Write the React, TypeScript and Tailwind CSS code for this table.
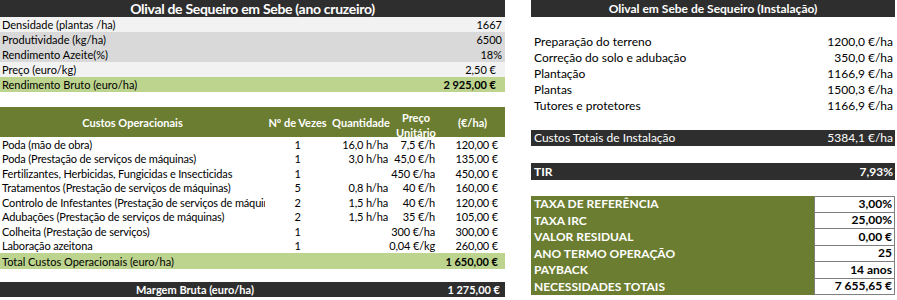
import React from "react";

const topRows = [
  { label: "Densidade (plantas /ha)", value: "1667", bg: "bg-[#f2f2f2]", pr: "pr-[3px]" },
  { label: "Produtividade (kg/ha)", value: "6500", bg: "bg-[#d9d9d9]", pr: "pr-[3px]" },
  { label: "Rendimento Azeite(%)", value: "18%", bg: "bg-[#d9d9d9]", pr: "pr-[3px]" },
  { label: "Preço (euro/kg)", value: "2,50 €", bg: "bg-[#f2f2f2]", pr: "pr-[9px]" },
];

const costRows = [
  ["Poda (mão de obra)", "1", "16,0 h/ha", "7,5 €/h", "120,00 €"],
  ["Poda (Prestação de serviços de máquinas)", "1", "3,0 h/ha", "45,0 €/h", "135,00 €"],
  ["Fertilizantes, Herbicidas, Fungicidas e Insecticidas", "1", "", "450 €/ha", "450,00 €"],
  ["Tratamentos (Prestação de serviços de máquinas)", "5", "0,8 h/ha", "40 €/h", "160,00 €"],
  ["Controlo de Infestantes (Prestação de serviços de máquinas)", "2", "1,5 h/ha", "40 €/h", "120,00 €"],
  ["Adubações (Prestação de serviços de máquinas)", "2", "1,5 h/ha", "35 €/h", "105,00 €"],
  ["Colheita (Prestação de serviços)", "1", "", "300 €/ha", "300,00 €"],
  ["Laboração azeitona", "1", "", "0,04 €/kg", "260,00 €"],
];

const instRows = [
  ["Preparação do terreno", "1200,0 €/ha"],
  ["Correção do solo e adubação", "350,0 €/ha"],
  ["Plantação", "1166,9 €/ha"],
  ["Plantas", "1500,3 €/ha"],
  ["Tutores e protetores", "1166,9 €/ha"],
];

const finRows = [
  ["TAXA DE REFERÊNCIA", "3,00%"],
  ["TAXA IRC", "25,00%"],
  ["VALOR RESIDUAL", "0,00 €"],
  ["ANO TERMO OPERAÇÃO", "25"],
  ["PAYBACK", "14 anos"],
  ["NECESSIDADES TOTAIS", "7 655,65 €"],
];

const grid = "grid grid-cols-[265px_65px_62px_48px_65px]";

export default function App() {
  return (
    <div className="w-[897px] h-[300px] bg-white overflow-hidden font-['Lato','Liberation_Sans',sans-serif] text-[11px] text-black leading-none whitespace-nowrap flex">
      {/* Left panel */}
      <div className="w-[505px] flex flex-col">
        <div className="h-[17px] bg-[#2e2e2e] text-white font-bold text-[14px] flex items-center justify-center tracking-[-0.3px]">
          Olival de Sequeiro em Sebe (ano cruzeiro)
        </div>
        {topRows.map((r) => (
          <div key={r.label} className={`h-[15px] ${r.bg} flex items-center justify-between pl-[2px] ${r.pr}`}>
            <span>{r.label}</span>
            <span>{r.value}</span>
          </div>
        ))}
        <div className="h-[15px] bg-[#bdd48e] flex items-center justify-between pl-[2px] pr-[9px]">
          <span>Rendimento Bruto (euro/ha)</span>
          <span className="font-bold">2 925,00 €</span>
        </div>

        <div className={`${grid} mt-[15px] h-[30px] bg-[#6b7d30] text-white font-bold`}>
          <div className="flex items-center justify-center">Custos Operacionais</div>
          <div className="flex items-center justify-center">Nº de Vezes</div>
          <div className="flex items-center justify-center">Quantidade</div>
          <div className="flex flex-col items-center pt-[5px] gap-[4px]">
            <span>Preço</span>
            <span>Unitário</span>
          </div>
          <div className="flex items-center justify-center">(€/ha)</div>
        </div>
        {costRows.map((r) => (
          <div key={r[0]} className={`${grid} h-[14.5px] tracking-[-0.15px]`}>
            <div className="flex items-center pl-[2px] overflow-hidden">{r[0]}</div>
            <div className="flex items-center justify-center">{r[1]}</div>
            <div className="flex items-center justify-end pr-[4px]">{r[2]}</div>
            <div className="flex items-center justify-end pr-[5px]">{r[3]}</div>
            <div className="flex items-center justify-end pr-[7px]">{r[4]}</div>
          </div>
        ))}
        <div className="h-[16px] bg-[#bdd48e] flex items-center justify-between pl-[2px] pr-[7px]">
          <span>Total Custos Operacionais (euro/ha)</span>
          <span className="font-bold">1 650,00 €</span>
        </div>
        <div className="mt-[13px] h-[15px] bg-[#2e2e2e] text-white font-bold flex items-center">
          <div className="w-[390px] flex justify-center">Margem Bruta (euro/ha)</div>
          <div className="flex-1 flex justify-end pr-[5px]">1 275,00 €</div>
        </div>
      </div>

      {/* Right panel */}
      <div className="ml-[26px] w-[364px] flex flex-col text-[12px]">
        <div className="h-[17px] bg-[#2e2e2e] text-white font-bold flex items-center justify-center">
          Olival em Sebe de Sequeiro (Instalação)
        </div>
        <div className="mt-[17px] flex flex-col">
          {instRows.map((r) => (
            <div key={r[0]} className="h-[16px] flex items-center justify-between pl-[3px] pr-[2px]">
              <span>{r[0]}</span>
              <span>{r[1]}</span>
            </div>
          ))}
        </div>
        <div className="mt-[16px] h-[16px] bg-[#2e2e2e] text-white flex items-center justify-between pl-[3px] pr-[2px]">
          <span>Custos Totais de Instalação</span>
          <span>5384,1 €/ha</span>
        </div>
        <div className="mt-[17px] h-[17px] bg-[#2e2e2e] text-white font-bold flex items-center justify-between pl-[3px] pr-[2px]">
          <span>TIR</span>
          <span>7,93%</span>
        </div>
        <div className="mt-[16px] grid grid-cols-[283px_81px] font-bold">
          {finRows.map((r, i) => (
            <React.Fragment key={r[0]}>
              <div className="h-[16.5px] bg-[#6b7d30] text-white flex items-center pl-[3px]">{r[0]}</div>
              <div
                className={`h-[16.5px] bg-white border-l border-r border-b border-[#7f7f7f] ${i === 0 ? "border-t" : ""} flex items-center justify-end pr-[2px]`}
              >
                {r[1]}
              </div>
            </React.Fragment>
          ))}
        </div>
      </div>
    </div>
  );
}
